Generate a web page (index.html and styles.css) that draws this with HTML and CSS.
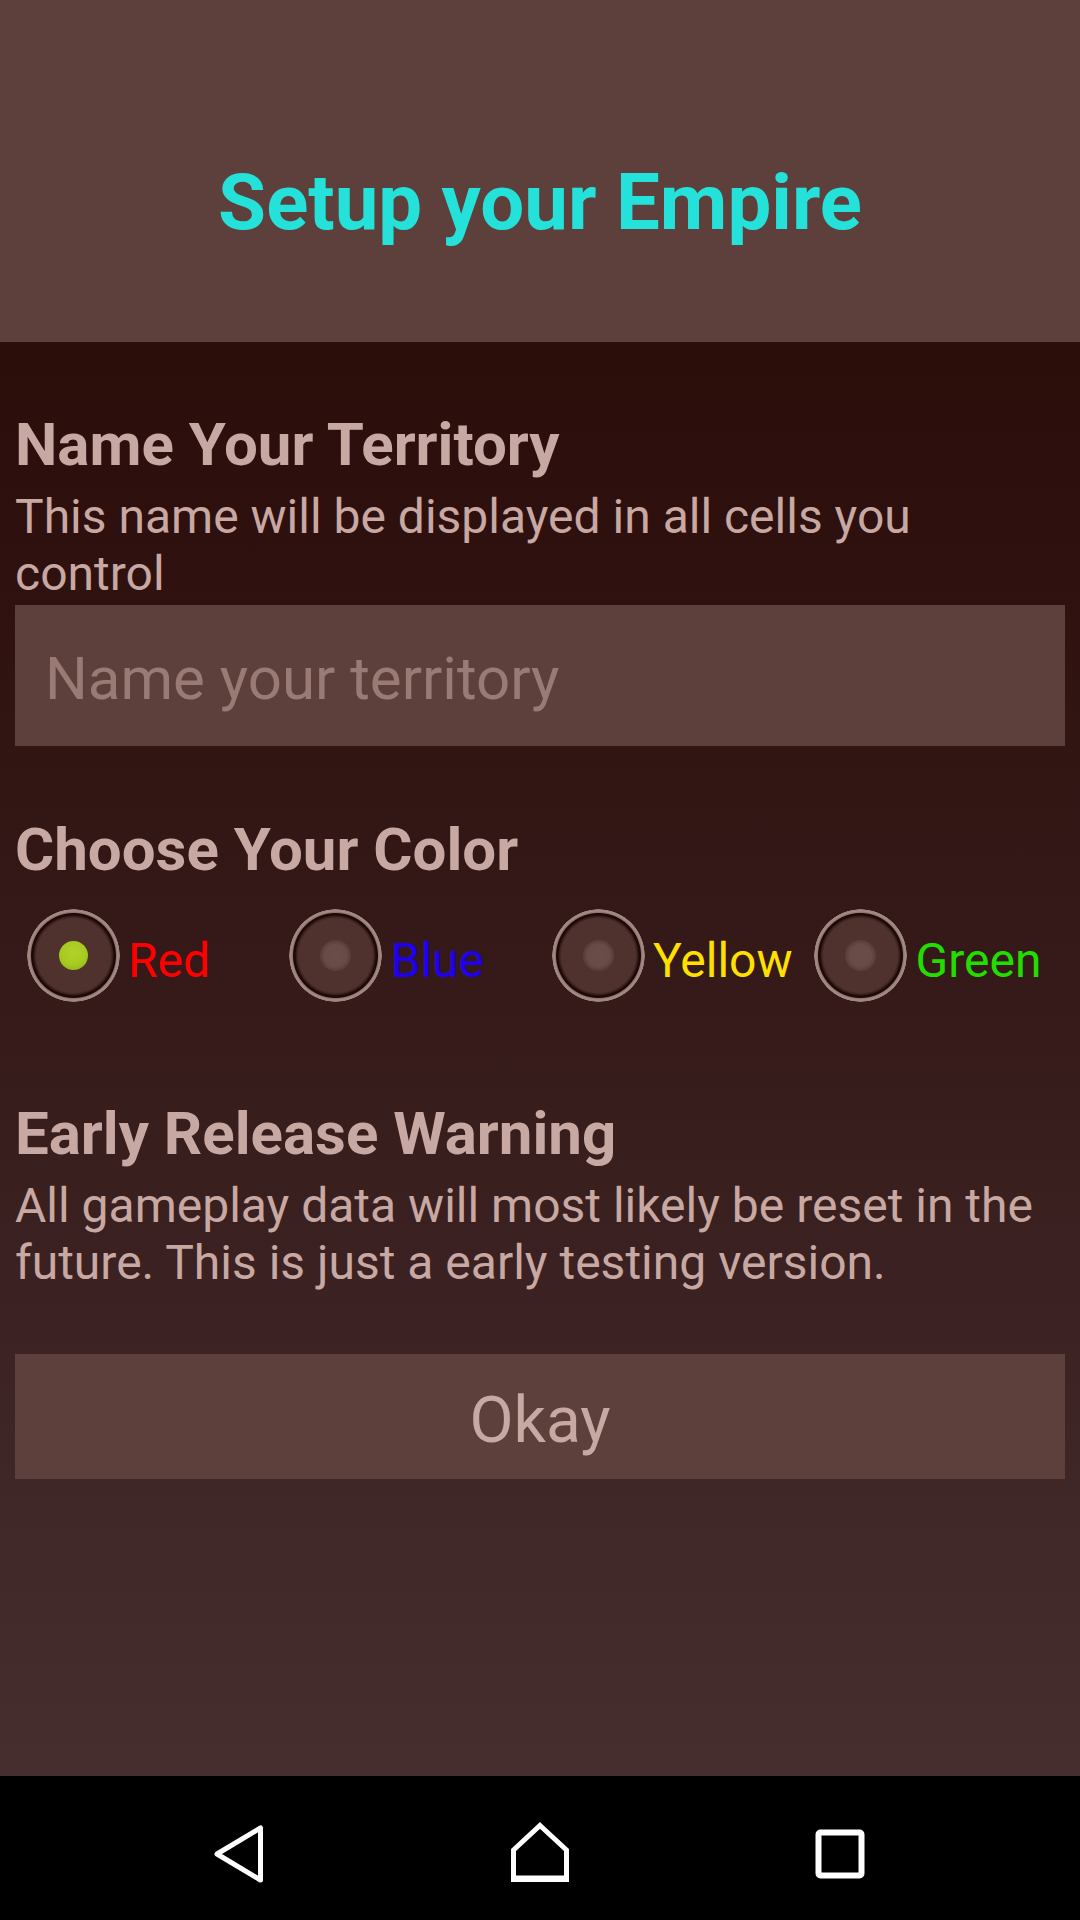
FILE: index.html
```html
<!DOCTYPE html>
<html lang="en">
<head>
<meta charset="utf-8">
<title>Setup your Empire</title>
<link rel="stylesheet" href="styles.css">
</head>
<body>
<div class="screen">
  <header class="header">
    <h1 class="title">Setup your Empire</h1>
  </header>
  <main class="content">
    <h2 class="heading heading-first">Name Your Territory</h2>
    <p class="desc">This name will be displayed in all cells you control</p>
    <input class="name-input" type="text" placeholder="Name your territory">

    <h2 class="heading heading-color">Choose Your Color</h2>
    <div class="radio-row">
      <label class="radio-item">
        <span class="radio-box"><span class="radio-circle checked"><span class="radio-dot-on"></span></span></span>
        <span class="radio-label red">Red</span>
      </label>
      <label class="radio-item">
        <span class="radio-box"><span class="radio-circle"></span></span>
        <span class="radio-label blue">Blue</span>
      </label>
      <label class="radio-item">
        <span class="radio-box"><span class="radio-circle"></span></span>
        <span class="radio-label yellow">Yellow</span>
      </label>
      <label class="radio-item">
        <span class="radio-box"><span class="radio-circle"></span></span>
        <span class="radio-label green">Green</span>
      </label>
    </div>

    <h2 class="heading heading-warning">Early Release Warning</h2>
    <p class="desc">All gameplay data will most likely be reset in the future. This is just a early testing version.</p>

    <button class="okay-btn" type="button">Okay</button>
  </main>
  <nav class="navbar">
    <div class="nav-slot">
      <svg class="nav-icon" width="64" height="64" viewBox="0 0 64 64"><path d="M52.5 7 L52.5 59 L9 33 Z" fill="none" stroke="#fff" stroke-width="5" stroke-linejoin="round"/></svg>
    </div>
    <div class="nav-slot">
      <svg class="nav-icon" width="64" height="64" viewBox="0 0 64 64"><path d="M32 4.5 L58.5 29 L58.5 57 L5.5 57 L5.5 29 Z" fill="none" stroke="#fff" stroke-width="5" stroke-linejoin="miter"/><rect x="3" y="55" width="58" height="6" fill="#fff"/></svg>
    </div>
    <div class="nav-slot">
      <svg class="nav-icon" width="64" height="64" viewBox="0 0 64 64"><rect x="10.5" y="11.5" width="43" height="43" rx="2" fill="none" stroke="#fff" stroke-width="6"/></svg>
    </div>
  </nav>
</div>
</body>
</html>
```

FILE: styles.css
```css
* { box-sizing: border-box; }

html, body {
  margin: 0;
  padding: 0;
  background: #000;
}

body {
  font-family: Roboto, "Noto Sans", "Liberation Sans", sans-serif;
}

.screen {
  width: 1080px;
  height: 1920px;
  display: flex;
  flex-direction: column;
}

.header {
  height: 342px;
  flex: 0 0 342px;
  background: #5d403b;
  padding-top: 157px;
  display: flex;
  justify-content: center;
}

.title {
  margin: 0;
  font-size: 78px;
  line-height: 91px;
  font-weight: 700;
  color: #24e2da;
}

.content {
  flex: 1 1 auto;
  background: linear-gradient(to bottom, #2b0d0a 0%, #351a19 45%, #462e2f 100%);
  padding: 0 15px;
  display: flex;
  flex-direction: column;
}

.heading {
  margin: 0;
  font-size: 60px;
  line-height: 70px;
  font-weight: 700;
  color: #c8a8a2;
}

.heading-first { margin-top: 68px; }
.heading-color { margin-top: 69px; }
.heading-warning { margin-top: 74px; }

.desc {
  margin: 8px 0 0;
  font-size: 48px;
  line-height: 57px;
  color: #c8a8a2;
  padding-right: 20px;
}

.name-input {
  margin-top: 3px;
  width: 100%;
  height: 141px;
  border: none;
  outline: none;
  background: #5d403b;
  padding: 6px 30px 0;
  font-family: Roboto, "Noto Sans", "Liberation Sans", sans-serif;
  font-size: 60px;
  color: #c8a8a2;
}

.name-input::placeholder {
  color: #9a7a74;
}

.radio-row {
  height: 140px;
  display: grid;
  grid-template-columns: repeat(4, 1fr);
  align-items: center;
}

.radio-item {
  display: flex;
  align-items: center;
}

.radio-box {
  width: 116px;
  height: 116px;
  display: flex;
  align-items: center;
  justify-content: center;
  flex: 0 0 116px;
}

.radio-circle {
  width: 93px;
  height: 93px;
  border-radius: 50%;
  display: flex;
  align-items: center;
  justify-content: center;
  background: radial-gradient(circle closest-side,
    #6a4d48 0, #684b46 11px, #5a3d3a 15px, #4f312e 16px,
    #4f312e 37px, #3a1f1c 39px, #1e0907 40.5px, #1e0907 42px,
    #8e746f 43px, #a58b85 44.5px, #9a807a 46px, rgba(154,128,122,0) 46.5px);
}

.radio-circle.checked {
  background: radial-gradient(circle closest-side,
    #4f312e 0, #4f312e 37px, #3a1f1c 39px, #1e0907 40.5px, #1e0907 42px,
    #8e746f 43px, #a58b85 44.5px, #9a807a 46px, rgba(154,128,122,0) 46.5px);
}

.radio-dot-on {
  width: 29px;
  height: 29px;
  border-radius: 50%;
  background: radial-gradient(circle at 50% 40%, #b0d42c 0, #a6ca20 55%, #8aa713 100%);
}

.radio-label {
  font-size: 48px;
  line-height: 56px;
  padding-top: 11px;
  margin-left: -3px;
}

.red { color: #ff0000; }
.blue { color: #1f00f2; }
.yellow { color: #ffe000; }
.green { color: #22dd00; }

.okay-btn {
  margin-top: 63px;
  width: 100%;
  height: 125px;
  border: none;
  background: #5d403b;
  color: #c8a8a2;
  font-family: Roboto, "Noto Sans", "Liberation Sans", sans-serif;
  font-size: 64px;
  padding: 8px 0 0;
}

.navbar {
  flex: 0 0 144px;
  height: 144px;
  background: #000;
  display: flex;
  justify-content: center;
  align-items: center;
  padding-top: 10px;
}

.nav-slot {
  width: 300px;
  display: flex;
  justify-content: center;
  align-items: center;
}

.nav-icon {
  display: block;
}
```
